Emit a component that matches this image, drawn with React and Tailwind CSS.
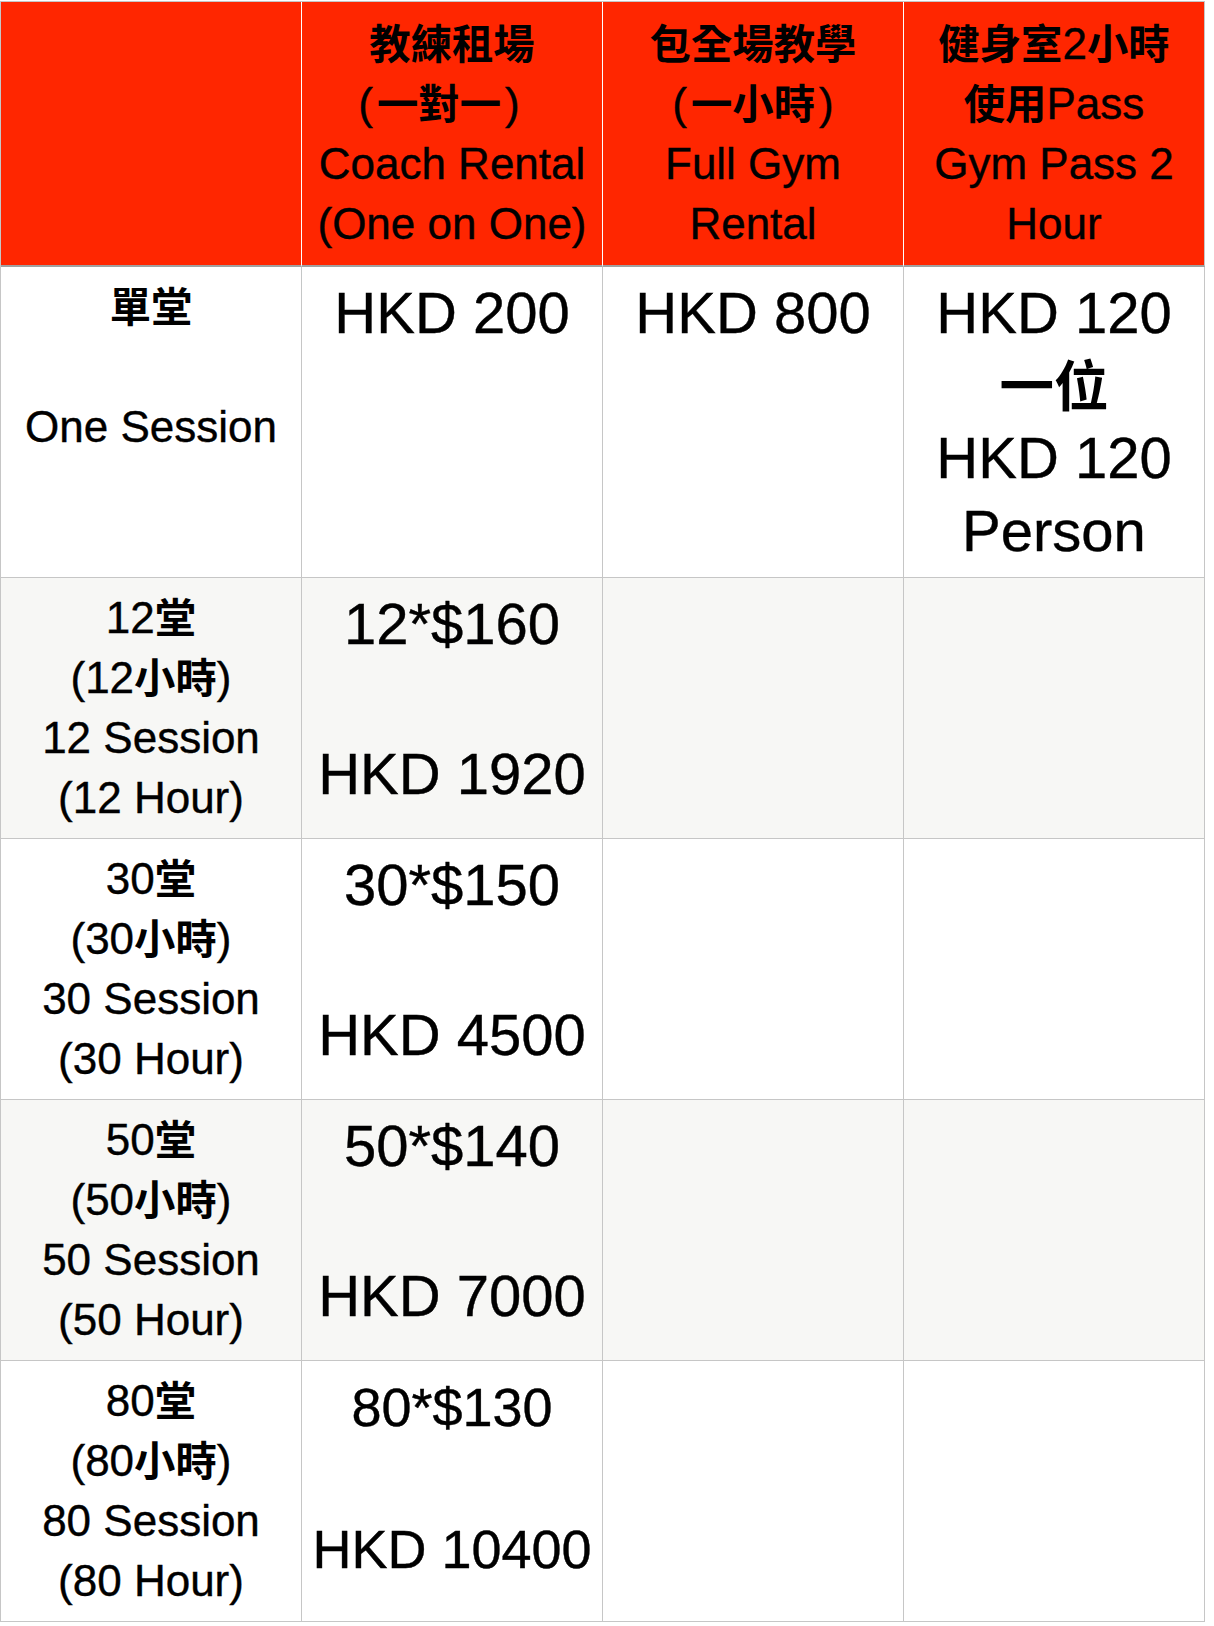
import React from "react";

const CJK = /([\u3000-\u303f\u3400-\u9fff\uff00-\uffef]+)/;

function T({ text }) {
  const parts = text.split(CJK);
  return (
    <>
      {parts.map((p, i) =>
        CJK.test(p) ? (
          <span key={i} className="font-bold text-[0.94em] [-webkit-text-stroke:0px]">
            {p}
          </span>
        ) : (
          <React.Fragment key={i}>{p}</React.Fragment>
        )
      )}
    </>
  );
}

function Lines({ lines, lh }) {
  return lines.map((l, i) =>
    typeof l === "number" ? (
      <div key={i} style={{ height: l }} />
    ) : (
      <div key={i} className={`whitespace-nowrap overflow-visible ${lh}`}>
        {l === "" ? "\u00a0" : typeof l === "string" ? <T text={l} /> : l}
      </div>
    )
  );
}

const P = ({ children }) => <span className="mx-[4px]">{children}</span>;

const headers = [
  [],
  [
    "教練租場",
    <>
      <P>(</P>
      <T text="一對一" />
      <P>)</P>
      <span className="inline-block w-[26px]" />
    </>,
    "Coach Rental",
    "(One on One)",
  ],
  [
    "包全場教學",
    <>
      <P>(</P>
      <T text="一小時" />
      <P>)</P>
    </>,
    "Full Gym",
    "Rental",
  ],
  ["健身室2小時", "使用Pass", "Gym Pass 2", "Hour"],
];

const rows = [
  {
    bg: "bg-white",
    left: ["單堂", "", "One Session"],
    cells: [["HKD 200"], ["HKD 800"], ["HKD 120", "一位", "HKD 120", "Person"]],
  },
  {
    bg: "bg-[#f7f7f5]",
    left: ["12堂", "(12小時)", "12 Session", "(12 Hour)"],
    cells: [["12*$160", 77, "HKD 1920"], [], []],
  },
  {
    bg: "bg-white",
    left: ["30堂", "(30小時)", "30 Session", "(30 Hour)"],
    cells: [["30*$150", 77, "HKD 4500"], [], []],
  },
  {
    bg: "bg-[#f7f7f5]",
    left: ["50堂", "(50小時)", "50 Session", "(50 Hour)"],
    cells: [["50*$140", 77, "HKD 7000"], [], []],
  },
  {
    bg: "bg-white",
    small: true,
    left: ["80堂", "(80小時)", "80 Session", "(80 Hour)"],
    cells: [["80*$130", 72, "HKD 10400"], [], []],
  },
];

export default function App() {
  return (
    <div className="min-h-[1626px] bg-white font-['Liberation_Sans','Noto_Sans_CJK_TC',sans-serif] text-black [-webkit-text-stroke:0.4px_black]">
      <div className="mt-px grid w-[1205px] grid-cols-[repeat(4,301px)] border-l border-t border-[#c6c6c6]">
        {headers.map((h, i) => (
          <div
            key={"h" + i}
            className={`bg-[#ff2600] border-b-2 border-b-[#a0a0a0] border-r pt-[12px] pb-[11px] text-center text-[44px] ${
              i === 3 ? "border-r-[#c6c6c6]" : "border-r-white"
            }`}
          >
            <Lines lines={h} lh="h-[60px] leading-[60px]" />
          </div>
        ))}
        {rows.map((r, ri) => (
          <React.Fragment key={"r" + ri}>
            <div
              className={`${r.bg} border-r border-b border-[#c6c6c6] py-[10px] text-center text-[44px]`}
            >
              <Lines lines={r.left} lh="h-[60px] leading-[60px]" />
            </div>
            {r.cells.map((c, ci) => (
              <div
                key={ci}
                className={`${r.bg} border-r border-b border-[#c6c6c6] py-[10px] text-center ${
                  r.small && ci === 0 ? "text-[54px]" : "text-[58px]"
                }`}
              >
                <Lines
                  lines={c}
                  lh={
                    r.small && ci === 0
                      ? "h-[68px] leading-[68px] mt-[2px]"
                      : "h-[72.5px] leading-[72.5px]"
                  }
                />
              </div>
            ))}
          </React.Fragment>
        ))}
      </div>
    </div>
  );
}
